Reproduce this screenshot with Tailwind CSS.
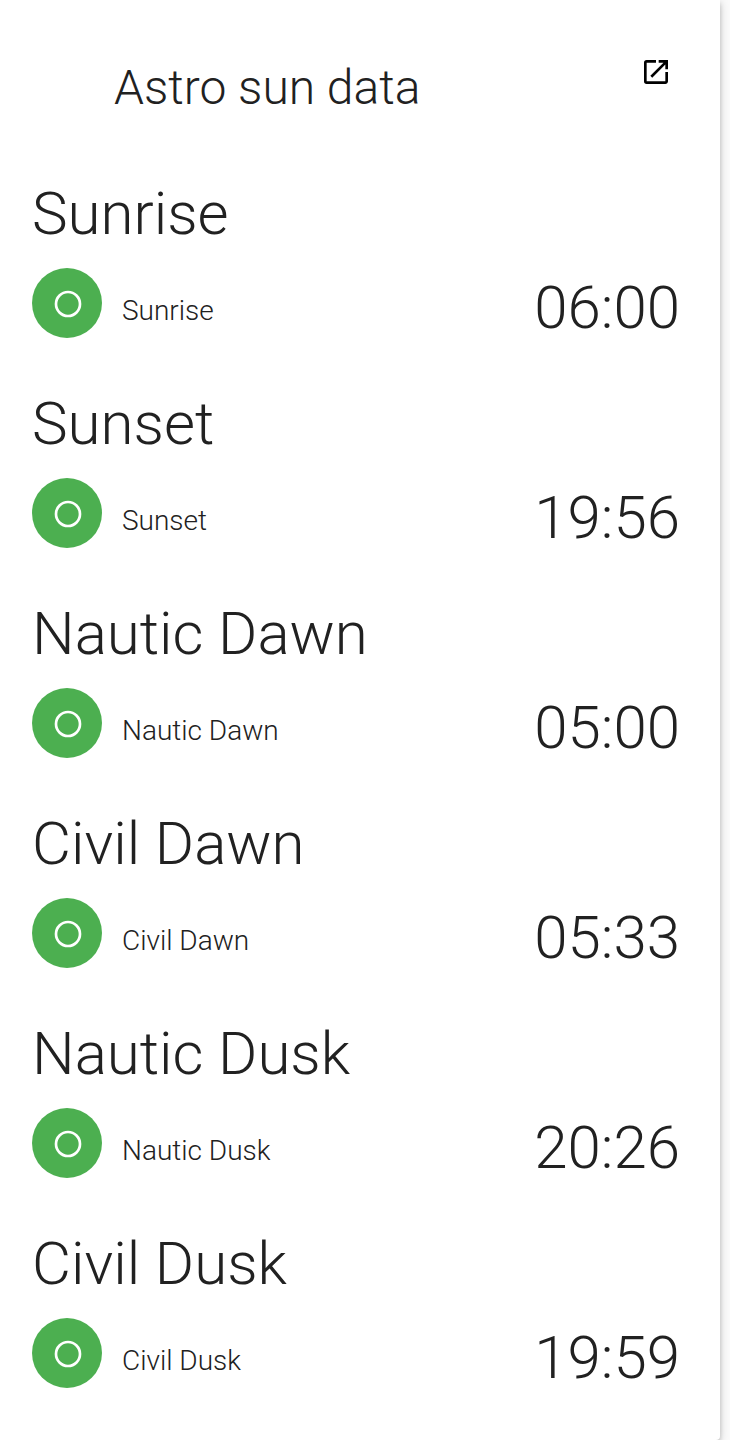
<!DOCTYPE html>
<html lang="en"><head><meta charset="utf-8"><title>Astro sun data</title>
<script src="https://cdn.jsdelivr.net/npm/@tailwindcss/browser@4"></script></head>
<body class="bg-[#fafafa] pr-2.5 font-['Roboto',sans-serif] font-light text-[#212121] antialiased">
<main class="rounded-br bg-white px-8 pb-0.5 shadow-[0_4px_4px_rgba(0,0,0,0.14),0_2px_10px_rgba(0,0,0,0.2)]">
<header class="flex h-[178px] items-start justify-between pl-[82px] pr-4">
<h1 class="pt-[60px] text-[48px] leading-[56px]">Astro sun data</h1>
<a href="#" aria-label="Open" class="mt-14 text-black"><svg class="size-8" viewBox="0 0 24 24" fill="currentColor"><path d="M19 19H5V5h7V3H5a2 2 0 0 0-2 2v14a2 2 0 0 0 2 2h14c1.1 0 2-.9 2-2v-7h-2v7zM14 3v2h3.59l-9.83 9.83 1.41 1.41L19 6.41V10h2V3h-7z"/></svg></a>
</header>
<div id="list"></div>
</main>
<template id="row"><section class="h-[210px]">
<h2 class="text-[60px] leading-[72px]"></h2>
<div class="mt-[18px] flex h-[70px] items-center">
<span class="flex size-[70px] items-center justify-center rounded-full bg-[#4caf50] pl-0.5 pt-0.5"><svg class="size-8 text-white" viewBox="0 0 24 24" fill="none" stroke="currentColor" stroke-width="2" aria-hidden="true"><circle cx="12" cy="12" r="9"/></svg></span>
<span class="ml-5 mt-4 grow text-[28px] leading-8" data-label></span>
<time class="mt-2.5 mr-2 text-[60px] leading-[72px]"></time>
</div></section></template>
<script>
const t=document.getElementById('row');
for(const [n,v] of [['Sunrise','06:00'],['Sunset','19:56'],['Nautic Dawn','05:00'],['Civil Dawn','05:33'],['Nautic Dusk','20:26'],['Civil Dusk','19:59']]){
const c=t.content.cloneNode(true);
c.querySelector('h2').textContent=n;c.querySelector('[data-label]').textContent=n;c.querySelector('time').textContent=v;
document.getElementById('list').append(c);}
</script>
</body></html>
